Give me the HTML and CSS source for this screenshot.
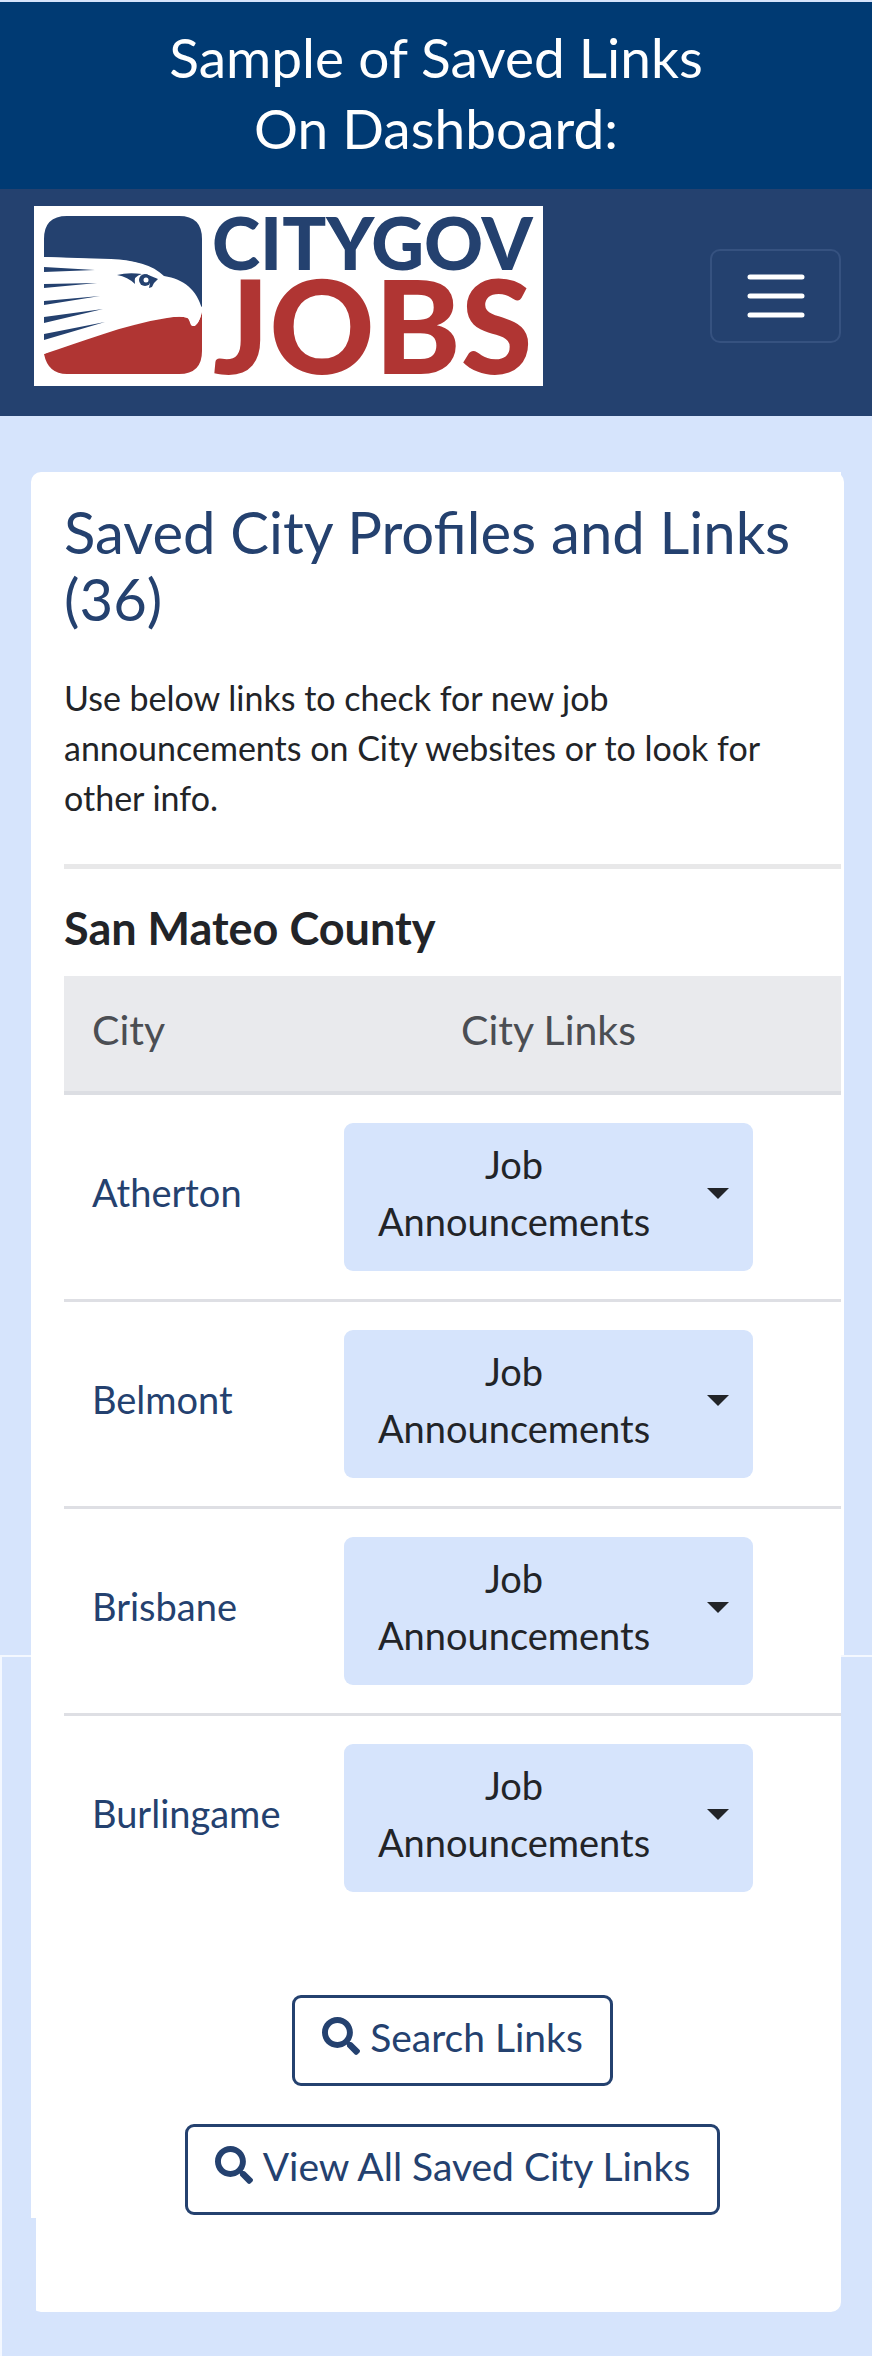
FILE: index.html
```html
<!DOCTYPE html>
<html lang="en">
<head>
<meta charset="utf-8">
<meta name="viewport" content="width=device-width, initial-scale=1">
<title>CityGov Jobs - Saved Links</title>
<link rel="stylesheet" href="styles.css">
</head>
<body>
<p class="banner">Sample of Saved Links<br>On Dashboard:</p>
<header class="navbar">
  <a class="brand" href="#" aria-label="CityGov Jobs home">
    <svg class="logo" viewBox="0 0 509 180" role="img" aria-label="CityGov Jobs">
      <rect width="509" height="180" fill="#fff"/>
      <path fill="#24416f" d="M10 51V33Q10 10 33 10H145Q168 10 168 33V101L129 73C117 58 98 54 77 54Z"/>
      <path fill="#b03533" d="M10 148C45 132 102 111 141 111Q154 110 155 114C157 118 156 120 160 120Q165 118 168 106V145Q168 168 145 168H33Q14 168 10 148Z"/>
      <path fill="#fff" d="M10 51 77 53C100 54 119 59 130 70C150 73 163 84 168 103Q167 115 161 120C157 121 157 115 154 112Q146 109 133 112C88 119 48 136 10 148Z"/>
      <path fill="#24416f" d="M10 61 61 64 10 66ZM10 78 63 77 10 82ZM10 95 66 90 10 99ZM10 111 69 103 10 117ZM10 128 71 116 10 134Z"/>
      <path fill="#24416f" d="M83 69Q94 66 108 68Q99 70 101 78Q94 71 83 69ZM112 68 124 73Q120 76 118 81L115 82 116 77Z"/>
      <circle cx="111" cy="74" r="6" fill="#24416f"/>
      <circle cx="112" cy="74" r="2.500" fill="#fff"/>
      <text class="logo-city" x="178" y="64">CITYGOV</text>
      <text class="logo-jobs" x="179" y="168">JOBS</text>
    </svg>
  </a>
  <button class="menu-toggle" type="button" aria-label="Toggle navigation">
    <svg viewBox="0 0 60 60" aria-hidden="true"><path d="M4 11H56M4 30H56M4 49H56" stroke="#fff" stroke-width="5" stroke-linecap="round"/></svg>
  </button>
</header>
<main class="page">
  <section class="card">
    <h1>Saved City Profiles and Links (36)</h1>
    <p class="intro">Use below links to check for new job announcements on City websites or to look for other info.</p>
    <hr>
    <h2>San Mateo County</h2>
    <table class="cities">
      <thead><tr><th scope="col">City</th><th scope="col">City Links</th></tr></thead>
      <tbody>
        <tr><td><a href="#">Atherton</a></td><td><button class="dropdown" type="button" aria-haspopup="true"><span>Job Announcements</span></button></td></tr>
        <tr><td><a href="#">Belmont</a></td><td><button class="dropdown" type="button" aria-haspopup="true"><span>Job Announcements</span></button></td></tr>
        <tr><td><a href="#">Brisbane</a></td><td><button class="dropdown" type="button" aria-haspopup="true"><span>Job Announcements</span></button></td></tr>
        <tr><td><a href="#">Burlingame</a></td><td><button class="dropdown" type="button" aria-haspopup="true"><span>Job Announcements</span></button></td></tr>
      </tbody>
    </table>
    <div class="actions">
      <button class="outline" type="button"><svg viewBox="0 0 512 512" aria-hidden="true"><path fill="currentColor" d="M505 442.700 405.300 343c-4.500-4.500-10.600-7-17-7H372c27.600-35.300 44-79.700 44-128C416 93.100 322.900 0 208 0S0 93.100 0 208s93.100 208 208 208c48.300 0 92.700-16.400 128-44v16.300c0 6.400 2.500 12.500 7 17l99.700 99.700c9.400 9.400 24.600 9.400 33.900 0l28.300-28.300c9.400-9.400 9.400-24.600.1-34zM208 336c-70.700 0-128-57.200-128-128 0-70.700 57.200-128 128-128 70.700 0 128 57.200 128 128 0 70.700-57.200 128-128 128z"/></svg>Search Links</button>
      <button class="outline" type="button"><svg viewBox="0 0 512 512" aria-hidden="true"><path fill="currentColor" d="M505 442.700 405.300 343c-4.500-4.500-10.600-7-17-7H372c27.600-35.300 44-79.700 44-128C416 93.100 322.900 0 208 0S0 93.100 0 208s93.100 208 208 208c48.300 0 92.700-16.400 128-44v16.300c0 6.400 2.500 12.500 7 17l99.700 99.700c9.400 9.400 24.600 9.400 33.900 0l28.300-28.300c9.400-9.400 9.400-24.600.1-34zM208 336c-70.700 0-128-57.200-128-128 0-70.700 57.200-128 128-128 70.700 0 128 57.200 128 128 0 70.700-57.200 128-128 128z"/></svg>View All Saved City Links</button>
    </div>
  </section>
</main>
</body>
</html>
```
FILE: styles.css
```css
* { box-sizing: border-box; }
body {
  margin: 0;
  background: #d6e4fc;
  color: #222428;
  font-family: Lato, "Open Sans", sans-serif;
}
button { font: inherit; cursor: pointer; }

.banner {
  margin: 0;
  padding: 20px 0 25px;
  border-top: 2px solid #d6e4fc;
  background: #003a73;
  color: #fff;
  font-size: 55px;
  line-height: 71px;
  text-align: center;
}

.navbar {
  display: flex;
  align-items: center;
  justify-content: space-between;
  padding: 17px 31px 30px 34px;
  background: #24416f;
}
.brand, .logo { display: block; }
.logo { width: 509px; height: 180px; overflow: visible; }
.logo-city { font: 900 73px Lato, sans-serif; fill: #24416f; }
.logo-jobs { font: 900 130px Lato, sans-serif; fill: #b03533; }
.menu-toggle {
  display: grid;
  place-items: center;
  width: 131px;
  height: 94px;
  padding: 0;
  border: 2px solid #365280;
  border-radius: 10px;
  background: none;
}
.menu-toggle svg { width: 60px; height: 60px; }

.page { position: relative; padding: 56px 31px 44px; }
/* Seam between the upper and the lower half of the page */
.page::before {
  content: "";
  position: absolute;
  inset: 1239px 0 0;
  border-top: 2px solid #f4f8ff;
  border-left: 2px solid #f4f8ff;
}
.card {
  position: relative;
  z-index: 0;
  padding: 26px 0 97px 33px;
  border-radius: 10px 0 10px 10px;
  background: #fff;
}
.card::before {
  content: "";
  position: absolute;
  z-index: -1;
  top: 0;
  right: -3px;
  width: 10px;
  height: 1183px;
  border-radius: 0 10px 0 0;
  background: #fff;
}
.card::after {
  content: "";
  position: absolute;
  left: 0;
  bottom: 0;
  width: 5px;
  height: 94px;
  background: #d6e4fc;
}

h1 {
  margin: 0;
  color: #24416f;
  font-size: 58px;
  font-weight: 400;
  line-height: 67px;
}
.intro {
  margin: 41px 0 0;
  padding-right: 48px;
  font-size: 34px;
  line-height: 50px;
}
hr {
  margin: 41px 0 0;
  border: 0;
  border-top: 5px solid #e8e8e9;
}
h2 {
  margin: 34px 0 0;
  font-size: 45px;
  font-weight: 700;
  line-height: 50px;
}

.cities {
  width: 100%;
  margin-top: 23px;
  border-collapse: collapse;
  font-size: 38px;
  line-height: 57px;
}
.cities th {
  padding: 25px 28px 33px;
  border-bottom: 4px solid #dcdee3;
  background: #e9eaed;
  color: #4b4e53;
  font-size: 41px;
  font-weight: 400;
  text-align: left;
}
.cities th:first-child { width: 252px; }
.cities th:last-child { padding-right: 88px; text-align: center; }
.cities td { padding: 28px; }
.cities td:first-child { padding: 28px 0 38px 28px; }
.cities td:last-child { padding-right: 88px; }
.cities tr + tr td { border-top: 3px solid #dedfe4; }
.cities a { color: #24416f; text-decoration: none; }

.dropdown {
  display: flex;
  align-items: center;
  justify-content: space-between;
  width: 100%;
  padding: 13px 24px 21px 32px;
  border: 0;
  border-radius: 9px;
  background: #d6e4fc;
  color: #222428;
}
.dropdown span { width: 276px; }
.dropdown::after {
  content: "";
  border: 11px solid transparent;
  border-top-color: #222428;
  border-bottom: 0;
}

.actions {
  display: flex;
  flex-direction: column;
  align-items: center;
  gap: 38px;
  margin-top: 75px;
}
.outline {
  display: flex;
  gap: 10px;
  padding: 11px 27px 17px;
  border: 3px solid #24416f;
  border-radius: 9px;
  background: #fff;
  color: #24416f;
  font-size: 39px;
  line-height: 57px;
}
.outline svg { width: 38px; height: 38px; margin-top: 8px; }
```
